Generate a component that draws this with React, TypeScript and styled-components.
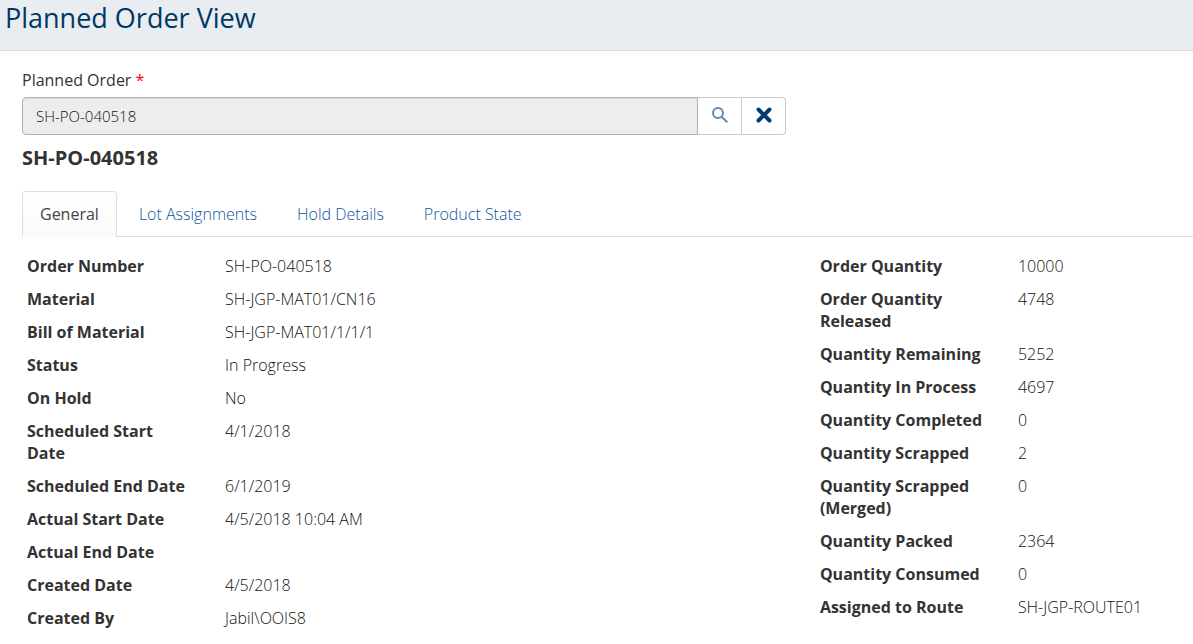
import React from "react";
import styled, { createGlobalStyle } from "styled-components";

const Global = createGlobalStyle`
  *, *::before, *::after { box-sizing: border-box; }
  body { margin: 0; background: #fff; color: #333; font: 400 16px/22px "Open Sans", sans-serif; }
  h1, h2, dl, dd { margin: 0; }
`;

const Header = styled.header`
  height: 51px;
  padding: 0 5px;
  background: #e9ecf1;
  border-bottom: 1px solid #d9dce8;
`;

const Title = styled.h1`
  color: #003865;
  font-size: 27px;
  font-weight: 400;
  line-height: 36px;
`;

const Content = styled.main`
  padding: 18px 0 0 22px;
`;

const Label = styled.label`
  display: block;
  margin-bottom: 6px;
`;

const Required = styled.span`
  color: #f00;
`;

const Lookup = styled.div`
  display: flex;
  width: 66%;
  max-width: 764px;
  height: 38px;
`;

const LookupInput = styled.input`
  flex: 1;
  min-width: 0;
  padding: 0 13px;
  border: 1px solid #b3b3b3;
  border-radius: 4px 0 0 4px;
  background: #ededed;
  box-shadow: inset 0 1px 1px rgba(0, 0, 0, 0.08);
  color: #111;
  font: 300 15px "Open Sans", sans-serif;
`;

const LookupButton = styled.button`
  display: flex;
  align-items: center;
  justify-content: center;
  width: 44px;
  padding: 0 0 2px;
  border: 1px solid #ccc;
  border-left: 0;
  background: #fff;
  &:last-child { border-radius: 0 4px 4px 0; }
`;

const OrderName = styled.h2`
  margin: 10px 0 20px;
  font-size: 20px;
  font-weight: 700;
  line-height: 26px;
`;

const Tabs = styled.nav`
  display: flex;
  gap: 4px;
  height: 46px;
  border-bottom: 1px solid #ddd;
`;

const Tab = styled.a<{ $active?: boolean }>`
  height: 46px;
  padding: 11px 17px;
  border: 1px solid ${p => (p.$active ? "#ddd" : "transparent")};
  border-bottom-color: ${p => (p.$active ? "#fafafa" : "transparent")};
  border-radius: 4px 4px 0 0;
  background: ${p => (p.$active ? "linear-gradient(#fff, #fafafa)" : "transparent")};
  color: ${p => (p.$active ? "#444" : "#0f559c")};
  font-weight: ${p => (p.$active ? 400 : 300)};
  text-decoration: none;
`;

const Columns = styled.div`
  display: grid;
  grid-template-columns: 68% 32%;
  padding: 18px 0 0 5px;
`;

const Details = styled.dl`
  display: flex;
  flex-direction: column;
  gap: 11px;
`;

const Row = styled.div`
  display: grid;
  grid-template-columns: 165px 1fr;
  column-gap: 33px;
  min-height: 22px;
`;

const Term = styled.dt`
  font-weight: 700;
`;

const Value = styled.dd`
  color: #111;
  font-weight: 300;
`;

const general: [string, string][] = [
  ["Order Number", "SH-PO-040518"],
  ["Material", "SH-JGP-MAT01/CN16"],
  ["Bill of Material", "SH-JGP-MAT01/1/1/1"],
  ["Status", "In Progress"],
  ["On Hold", "No"],
  ["Scheduled Start Date", "4/1/2018"],
  ["Scheduled End Date", "6/1/2019"],
  ["Actual Start Date", "4/5/2018 10:04 AM"],
  ["Actual End Date", ""],
  ["Created Date", "4/5/2018"],
  ["Created By", "Jabil\\OOIS8"],
];

const quantities: [string, string][] = [
  ["Order Quantity", "10000"],
  ["Order Quantity Released", "4748"],
  ["Quantity Remaining", "5252"],
  ["Quantity In Process", "4697"],
  ["Quantity Completed", "0"],
  ["Quantity Scrapped", "2"],
  ["Quantity Scrapped (Merged)", "0"],
  ["Quantity Packed", "2364"],
  ["Quantity Consumed", "0"],
  ["Assigned to Route", "SH-JGP-ROUTE01"],
];

const DetailList = ({ rows }: { rows: [string, string][] }) => (
  <Details>
    {rows.map(([term, value]) => (
      <Row key={term}>
        <Term>{term}</Term>
        <Value>{value}</Value>
      </Row>
    ))}
  </Details>
);

export default function App() {
  return (
    <>
      <Global />
      <Header>
        <Title>Planned Order View</Title>
      </Header>
      <Content>
        <Label htmlFor="planned-order">
          Planned Order <Required>*</Required>
        </Label>
        <Lookup>
          <LookupInput id="planned-order" readOnly value="SH-PO-040518" />
          <LookupButton type="button" aria-label="Search">
            <svg width="18" height="18" viewBox="0 0 18 18" fill="none" stroke="#6488b0" strokeWidth="2">
              <circle cx="7" cy="7" r="5" />
              <path d="M10.700 10.700l5.600 5.600" />
            </svg>
          </LookupButton>
          <LookupButton type="button" aria-label="Clear">
            <svg width="18" height="18" viewBox="0 0 18 18" stroke="#003b71" strokeWidth="4" strokeLinecap="round">
              <path d="M3.500 3.500l11 11M14.500 3.500l-11 11" />
            </svg>
          </LookupButton>
        </Lookup>
        <OrderName>SH-PO-040518</OrderName>
        <Tabs>
          <Tab href="#general" $active>General</Tab>
          <Tab href="#lots">Lot Assignments</Tab>
          <Tab href="#holds">Hold Details</Tab>
          <Tab href="#state">Product State</Tab>
        </Tabs>
        <Columns>
          <DetailList rows={general} />
          <DetailList rows={quantities} />
        </Columns>
      </Content>
    </>
  );
}
